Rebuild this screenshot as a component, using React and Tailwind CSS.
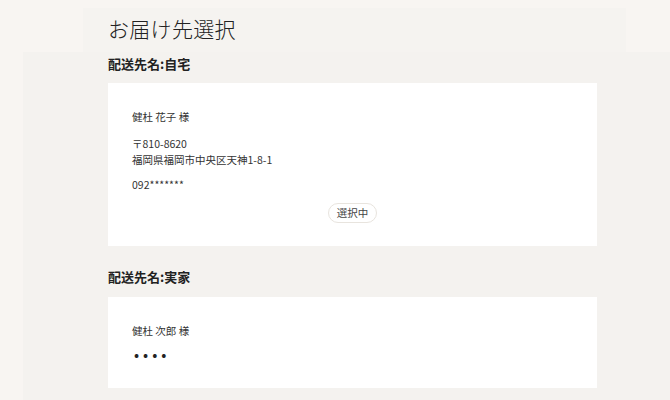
export default function App() {
  const font = { fontFamily: '"Noto Sans CJK JP", "Noto Sans", sans-serif' };
  return (
    <div className="w-[670px] h-[400px] overflow-hidden bg-[#f8f5f2] text-[#333]" style={font}>
      <div className="pt-[8px] pl-[83px] w-[626px]">
        <div className="h-[44px] bg-[#f5f3f0] pl-[25px] flex items-center">
          <h1 className="text-[21px] font-light leading-none text-[#222] tracking-[0.3px] -mt-[3px]">お届け先選択</h1>
        </div>
      </div>
      <div className="ml-[23px] bg-[#f4f2ef] h-[348px] pl-[85px] pr-[73px]">
        <h2 className="text-[13px] font-bold leading-none pt-[5px] h-[31px] text-[#222]">配送先名:自宅</h2>
        <div className="bg-white h-[163px] pl-[24px] pt-[26px] text-[10.5px] leading-[16px]">
          <p>健杜 花子 様</p>
          <p className="mt-[11px]">〒810-8620</p>
          <p>福岡県福岡市中央区天神1-8-1</p>
          <p className="mt-[9px]">092*******</p>
          <div className="flex justify-center -ml-[24px] mt-[10px]">
            <span className="h-[20px] px-[8px] rounded-full border border-[#e8e4de] text-[10.5px] leading-[18px] text-[#444]">選択中</span>
          </div>
        </div>
        <h2 className="text-[13px] font-bold leading-none pt-[24px] h-[51px] text-[#222]">配送先名:実家</h2>
        <div className="bg-white h-[91px] pl-[24px] pt-[26px] text-[10.5px] leading-[16px]">
          <p>健杜 次郎 様</p>
          <p className="mt-[7px] ml-[2px] text-[15px] leading-[16px] tracking-[4px] text-[#222]">••••</p>
        </div>
      </div>
    </div>
  );
}
